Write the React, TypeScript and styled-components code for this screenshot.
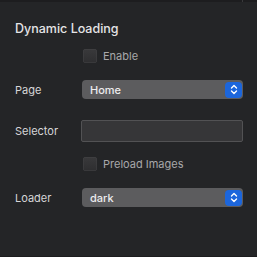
import React from 'react';
import styled, { createGlobalStyle } from 'styled-components';

const GlobalStyle = createGlobalStyle`
  html, body {
    margin: 0;
    padding: 0;
    background: #242527;
  }
  body {
    font-family: Inter, "Noto Sans", "Liberation Sans", sans-serif;
  }
`;

const Panel = styled.div`
  width: 257px;
  height: 257px;
  box-sizing: border-box;
  background: #242527;
  border-bottom: 1px solid #1c1c1e;
  display: flex;
  flex-direction: column;
  overflow: hidden;
`;

const TopEdge = styled.div`
  height: 2px;
  background: #1d1d1f;
  display: flex;
  justify-content: flex-end;
  padding-right: 14px;
`;

const EdgeTick = styled.div`
  width: 1px;
  background: #3a3a3c;
`;

const Body = styled.div`
  flex: 1;
  padding: 20px 14px 0 15px;
  display: flex;
  flex-direction: column;
`;

const Title = styled.div`
  font-size: 12.5px;
  font-weight: 500;
  color: #e4e4e6;
  height: 14px;
  line-height: 14px;
  margin-bottom: 13px;
`;

const Row = styled.div<{ h: number; mb: number }>`
  display: grid;
  grid-template-columns: 67px 1fr;
  align-items: center;
  height: ${(p) => p.h}px;
  margin-bottom: ${(p) => p.mb}px;
`;

const Label = styled.div`
  font-size: 11px;
  color: #d6d6d8;
`;

const CheckWrap = styled.label`
  display: flex;
  align-items: center;
  gap: 6px;
  padding-left: 1px;
  font-size: 11px;
  color: #a8a8aa;
`;

const Box = styled.span`
  width: 14px;
  height: 14px;
  border-radius: 3px;
  background: linear-gradient(#39393b, #2e2e30);
  box-shadow: inset 0 0 0 0.5px #444446;
`;

const Select = styled.div`
  height: 19px;
  border-radius: 4px;
  background: #5c5c5e;
  display: flex;
  align-items: center;
  justify-content: space-between;
  padding: 0 1px 0 8px;
  font-size: 11px;
  font-weight: 500;
  color: #ececee;
`;

const Stepper = styled.span`
  width: 17px;
  height: 16px;
  border-radius: 4px;
  background: #1c66dc;
  display: flex;
  align-items: center;
  justify-content: center;
`;

const Input = styled.div`
  height: 20px;
  margin-left: -1px;
  border-radius: 2px;
  background: #363638;
  border: 1px solid #525254;
`;

const Chevrons = () => (
  <svg width="8" height="11" viewBox="0 0 8 11">
    <path d="M1.5 4 L4 1.5 L6.5 4 M1.5 7 L4 9.5 L6.5 7" fill="none" stroke="#fff" strokeWidth="1.4" strokeLinecap="round" strokeLinejoin="round" />
  </svg>
);

const Checkbox: React.FC<{ text: string }> = ({ text }) => (
  <CheckWrap>
    <Box />
    {text}
  </CheckWrap>
);

const Dropdown: React.FC<{ value: string }> = ({ value }) => (
  <Select>
    {value}
    <Stepper>
      <Chevrons />
    </Stepper>
  </Select>
);

const App: React.FC = () => (
  <Panel>
    <GlobalStyle />
    <TopEdge>
      <EdgeTick />
    </TopEdge>
    <Body>
      <Title>Dynamic Loading</Title>
      <Row h={14} mb={17}>
        <span />
        <Checkbox text="Enable" />
      </Row>
      <Row h={19} mb={21}>
        <Label>Page</Label>
        <Dropdown value="Home" />
      </Row>
      <Row h={22} mb={15}>
        <Label>Selector</Label>
        <Input />
      </Row>
      <Row h={14} mb={17}>
        <span />
        <Checkbox text="Preload Images" />
      </Row>
      <Row h={19} mb={0}>
        <Label>Loader</Label>
        <Dropdown value="dark" />
      </Row>
    </Body>
  </Panel>
);

export default App;
